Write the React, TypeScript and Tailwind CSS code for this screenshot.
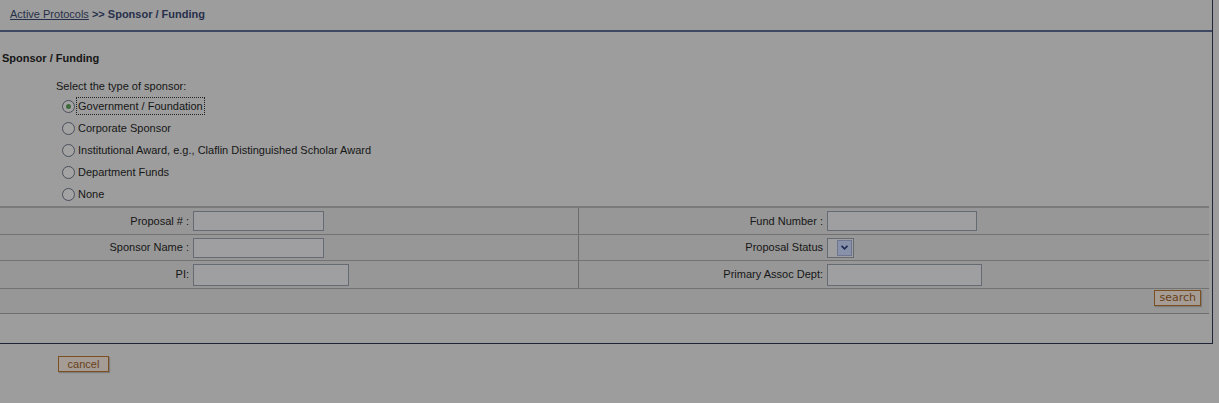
import { FC } from 'react';

const sponsorTypes = [
  'Government / Foundation',
  'Corporate Sponsor',
  'Institutional Award, e.g., Claflin Distinguished Scholar Award',
  'Department Funds',
  'None',
];

const Radio: FC<{ checked?: boolean }> = ({ checked }) => (
  <span className="w-[13px] h-[13px] rounded-full border border-[#4a4f5a] bg-[#a3a3a3] flex items-center justify-center flex-shrink-0">
    {checked && <span className="w-[5px] h-[5px] rounded-full bg-[#3f6a3c]" />}
  </span>
);

const TextBox: FC<{ w: string; tall?: boolean }> = ({ w, tall }) => (
  <span className={`block ${w} ${tall ? 'h-[22px]' : 'h-[20px]'} border border-[#666a72] bg-[#9f9fa1]`} />
);

export default function App() {
  return (
    <div
      className="w-[1219px] h-[403px] bg-[#9d9d9d] text-[#161616] text-[11px] overflow-hidden"
      style={{ fontFamily: '"Liberation Sans", Arial, sans-serif' }}
    >
      {/* Panel */}
      <div className="w-[1213px] border-r border-b border-[#1f2535]">
        {/* Breadcrumb */}
        <div className="h-[32px] border-b-2 border-[#3e4862] pl-[10px] pt-[6px]">
          <a className="underline text-[#27304a]">Active Protocols</a>
          <span className="font-bold text-[#27304a]"> &gt;&gt; Sponsor / Funding</span>
        </div>

        <div className="pl-[2px] pt-[19px] font-bold text-[11px] leading-[14px]">Sponsor / Funding</div>

        <div className="pl-[56px] pt-[14px] leading-[14px]">Select the type of sponsor:</div>

        <div className="pl-[62px] pt-[2px] flex flex-col">
          {sponsorTypes.map((t, i) => (
            <label key={t} className="h-[22px] flex items-center gap-[2px]">
              <Radio checked={i === 0} />
              <span className={i === 0 ? 'outline-1 outline-dotted outline-[#222] px-[1px]' : 'px-[1px]'}>{t}</span>
            </label>
          ))}
        </div>

        {/* Search table */}
        <div className="mt-[1px] w-[1209px] bg-[#979797] border-t-2 border-[#7a7a7a] border-b border-b-[#6e6e6e]">
          {[
            ['Proposal # :', 'w-[131px]', false, 'Fund Number :', 'w-[150px]', 'input'],
            ['Sponsor Name :', 'w-[131px]', false, 'Proposal Status', '', 'select'],
            ['PI:', 'w-[156px]', true, 'Primary Assoc Dept:', 'w-[155px]', 'input'],
          ].map(([l1, w1, tall, l2, w2, kind], i) => (
            <div key={i} className={`flex ${i === 2 ? 'h-[28px]' : 'h-[26px]'} ${i > 0 ? 'border-t border-[#727272]' : ''}`}>
              <div className="w-[577px] flex items-center">
                <span className="w-[193px] text-right pr-[4px]">{l1 as string}</span>
                <TextBox w={w1 as string} tall={tall as boolean} />
              </div>
              <div className="flex-1 flex items-center border-l border-[#6c6c6c] ml-[1px]">
                <span className="w-[248px] text-right pr-[4px]">{l2 as string}</span>
                {kind === 'select' ? (
                  <span className="w-[27px] h-[20px] border border-[#666a72] bg-[#9f9fa1] flex justify-end p-[1px]">
                    <span className="w-[15px] h-full bg-[#8891aa] border border-[#6e7690] flex items-center justify-center">
                      <svg width="7" height="5" viewBox="0 0 7 5">
                        <path d="M0.5 0.8 L3.5 3.8 L6.5 0.8" stroke="#1e2a52" strokeWidth="1.6" fill="none" />
                      </svg>
                    </span>
                  </span>
                ) : (
                  <TextBox w={w2 as string} tall={tall as boolean} />
                )}
              </div>
            </div>
          ))}
          <div className="h-[25px] border-t border-[#727272] flex justify-end items-start pt-[1px] pr-[8px]">
            <button
              className="h-[16px] px-[4px] border border-[#7b4f1f] bg-[#a49c95] text-[#6a4118] text-[11px] leading-[12px] shadow-[1px_1px_1px_#7d7d7d]"
              style={{ fontFamily: '"DejaVu Sans", Verdana, sans-serif' }}
            >
              search
            </button>
          </div>
        </div>
        <div className="h-[29px]" />
      </div>

      <div className="pl-[58px] pt-[12px]">
        <button
          className="h-[16px] w-[51px] border border-[#7b4f1f] bg-[#a49c95] text-[#6a4118] text-[11px] leading-[12px] shadow-[1px_1px_1px_#7d7d7d]"
          style={{ fontFamily: '"Liberation Sans", Arial, sans-serif' }}
        >
          cancel
        </button>
      </div>
    </div>
  );
}
